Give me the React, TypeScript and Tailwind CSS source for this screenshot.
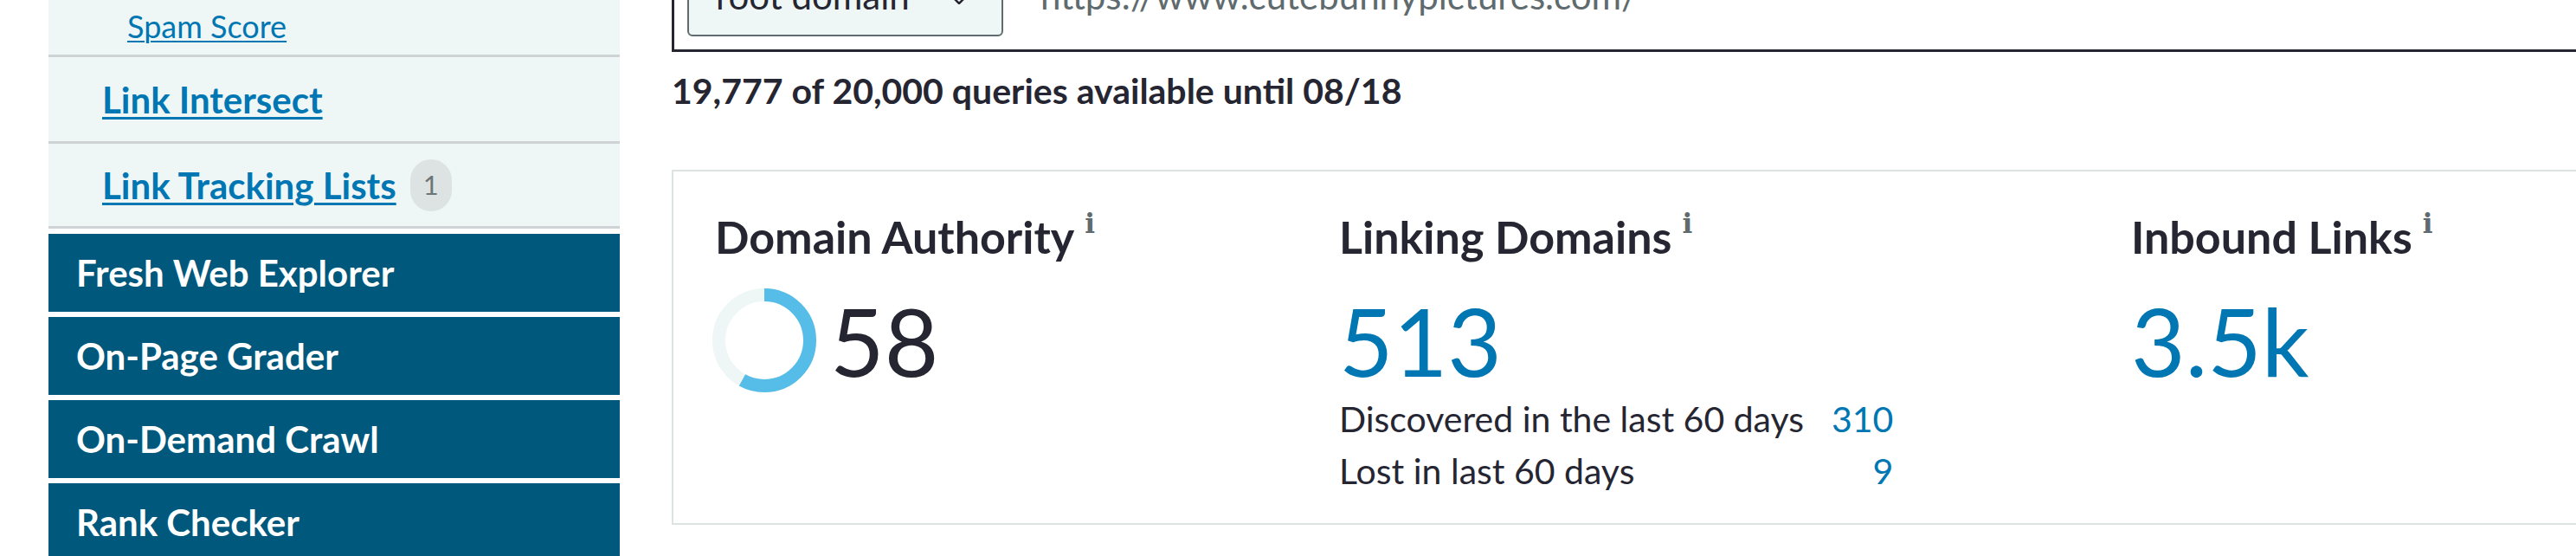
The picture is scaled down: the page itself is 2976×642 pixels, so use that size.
import React from "react";

function InfoMark() {
  return (
    <span className="ml-[12px] text-[31px] leading-[30px] font-bold font-['DejaVu_Serif',serif] text-[#5f6b6e]">
      i
    </span>
  );
}

function Donut({ value }: { value: number }) {
  const r = 52.5;
  const c = 2 * Math.PI * r;
  return (
    <svg width="120" height="120" viewBox="0 0 120 120" className="shrink-0">
      <circle cx="60" cy="60" r={r} fill="none" stroke="#eef6f6" strokeWidth="15" />
      <circle
        cx="60"
        cy="60"
        r={r}
        fill="none"
        stroke="#55bde8"
        strokeWidth="15"
        strokeDasharray={`${(c * value) / 100} ${c}`}
        transform="rotate(-90 60 60)"
      />
    </svg>
  );
}

export default function App() {
  return (
    <div className="w-[2976px] h-[642px] overflow-hidden bg-white font-['Lato','Noto_Sans',sans-serif] text-[#262633]">
      <div className="flex pl-[56px]">
        {/* Sidebar */}
        <aside className="w-[660px] shrink-0 mt-[-3px]">
          <div className="h-[69px] flex items-center pl-[91px] bg-[#eef6f6] border-b-[3px] border-[#cfd3d5]">
            <a className="text-[36px] leading-[43px] text-[#0077b3] underline decoration-2 underline-offset-[3px]">
              Spam Score
            </a>
          </div>
          <div className="h-[100px] flex items-center pl-[62px] bg-[#eef6f6] border-b-[3px] border-[#cfd3d5]">
            <a className="text-[42px] leading-[50px] font-bold text-[#0077b3] underline decoration-[3px] underline-offset-[4px]">
              Link Intersect
            </a>
          </div>
          <div className="h-[98px] flex items-center pl-[62px] bg-[#eef6f6] border-b-[3px] border-[#cfd3d5]">
            <a className="text-[42px] leading-[50px] font-bold text-[#0077b3] underline decoration-[3px] underline-offset-[4px]">
              Link Tracking Lists
            </a>
            <span className="ml-[16px] w-[48px] h-[60px] rounded-full bg-[#dde3e3] flex items-center justify-center text-[31px] text-[#6c7578]">
              1
            </span>
          </div>
          <div className="mt-[6px] flex flex-col gap-[6px]">
            {["Fresh Web Explorer", "On-Page Grader", "On-Demand Crawl", "Rank Checker"].map((t) => (
              <div
                key={t}
                className="h-[90px] flex items-center pl-[32px] bg-[#00587c] text-white font-bold text-[42px] leading-[50px]"
              >
                {t}
              </div>
            ))}
          </div>
        </aside>

        {/* Main */}
        <main className="ml-[60px] w-[2300px] shrink-0">
          <div className="mt-[-70px] h-[130px] border-[3px] border-[#262633] flex items-end pl-[15px] pb-[15px]">
            <div className="flex items-center">
              <div className="w-[365px] h-[94px] flex items-center pl-[31px] bg-[#eef6f6] border-2 border-[#5f6b6e] rounded-[6px]">
                <span className="text-[42px] leading-[50px]">root domain</span>
                <svg width="14" height="8" viewBox="0 0 14 8" className="ml-auto mr-[42px] translate-y-[6px]">
                  <path d="M1 1 L7 7 L13 1" fill="none" stroke="#262633" strokeWidth="2.5" />
                </svg>
              </div>
              <span className="ml-[43px] text-[42px] leading-[50px] text-[#5f6b6e]">
                https://www.cutebunnypictures.com/
              </span>
            </div>
          </div>

          <p className="mt-[21px] text-[41px] leading-[48px] font-bold">
            19,777 of 20,000 queries available until 08/18
          </p>

          <div className="mt-[67px] border-2 border-[#dde3e3] pl-[48px] pt-[45px] pb-[30px] flex">
            {/* Domain Authority */}
            <div className="w-[721px] shrink-0">
              <div className="flex items-start">
                <span className="text-[52px] leading-[60px] font-bold">Domain Authority</span>
                <InfoMark />
              </div>
              <div className="mt-[30px] flex items-center ml-[-3px]">
                <Donut value={58} />
                <span className="ml-[16px] text-[108px] leading-[108px] font-normal">58</span>
              </div>
            </div>

            {/* Linking Domains */}
            <div className="w-[915px] shrink-0">
              <div className="flex items-start">
                <span className="text-[52px] leading-[60px] font-bold">Linking Domains</span>
                <InfoMark />
              </div>
              <div className="mt-[36px] text-[108px] leading-[108px] font-normal text-[#0077b3]">513</div>
              <div className="mt-[7px] grid grid-cols-[auto_auto] gap-x-[32px] w-fit text-[41px] leading-[60px]">
                <span>Discovered in the last 60 days</span>
                <span className="text-right text-[#0077b3]">310</span>
                <span>Lost in last 60 days</span>
                <span className="text-right text-[#0077b3]">9</span>
              </div>
            </div>

            {/* Inbound Links */}
            <div className="flex-1">
              <div className="flex items-start">
                <span className="text-[52px] leading-[60px] font-bold">Inbound Links</span>
                <InfoMark />
              </div>
              <div className="mt-[36px] text-[108px] leading-[108px] font-normal text-[#0077b3]">3.5k</div>
            </div>
          </div>
        </main>
      </div>
    </div>
  );
}
